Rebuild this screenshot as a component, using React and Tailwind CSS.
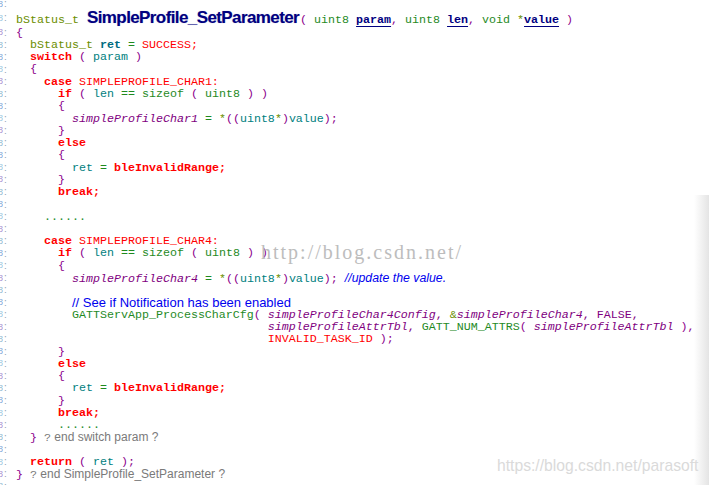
import React from "react";

const P = "text-[#8b008b]";
const G = "text-[#1f8a1f]";
const O = "text-[#6b8e00]";
const TL = "text-[#008080]";
const R = "text-[#ff0000]";
const RB = "text-[#ff0000] font-bold";
const IT = "text-[#800080] italic";
const FN = "text-[#800080]";
const GR = "text-[#7a7a7a]";
const BL = "text-[#0000ee] font-['Liberation_Sans',sans-serif] text-[13px]";
const BLI = "text-[#0000ee] font-['Liberation_Sans',sans-serif] text-[12.3px] italic";
const GS = "text-[#7a7a7a] font-['Liberation_Sans',sans-serif] text-[12px]";

const sp = (n) => " ".repeat(n);

const ifLine = (ind) => [
  [sp(ind), ""],
  ["if", RB],
  [" ", ""],
  ["(", P],
  [" ", ""],
  ["len", TL],
  [" ", ""],
  ["==", G],
  [" ", ""],
  ["sizeof", G],
  [" ", ""],
  ["(", P],
  [" ", ""],
  ["uint8", G],
  [" ", ""],
  [")", P],
  [" ", ""],
  [")", P],
];

const brace = (ind, ch = "{") => [[sp(ind), ""], [ch, P]];

const assign = (name) => [
  [sp(8), ""],
  [name, IT],
  [" ", ""],
  ["=", G],
  [" ", ""],
  ["*", O],
  ["((", P],
  ["uint8", TL],
  ["*", O],
  [")", P],
  ["value", TL],
  [")", P],
  [";", P],
];

const retInvalid = [
  [sp(8), ""],
  ["ret", TL],
  [" ", ""],
  ["=", G],
  [" ", ""],
  ["bleInvalidRange;", R + " font-bold"],
];

const lines = [
  [],
  "HEADER",
  brace(0),
  [
    [sp(2), ""],
    ["bStatus_t", O],
    [" ", ""],
    ["ret", "text-[#006b80] font-bold"],
    [" ", ""],
    ["=", G],
    [" ", ""],
    ["SUCCESS;", R],
  ],
  [
    [sp(2), ""],
    ["switch", RB],
    [" ", ""],
    ["(", P],
    [" ", ""],
    ["param", TL],
    [" ", ""],
    [")", P],
  ],
  brace(2),
  [
    [sp(4), ""],
    ["case", RB],
    [" ", ""],
    ["SIMPLEPROFILE_CHAR1:", R],
  ],
  ifLine(6),
  brace(6),
  assign("simpleProfileChar1"),
  brace(6, "}"),
  [[sp(6), ""], ["else", RB]],
  brace(6),
  retInvalid,
  brace(6, "}"),
  [[sp(6), ""], ["break;", RB]],
  [],
  [[sp(4), ""], ["......", G]],
  [],
  [
    [sp(4), ""],
    ["case", RB],
    [" ", ""],
    ["SIMPLEPROFILE_CHAR4:", R],
  ],
  ifLine(6),
  brace(6),
  [...assign("simpleProfileChar4"), [" ", ""], ["//update the value.", BLI]],
  [],
  [[sp(8), ""], ["// See if Notification has been enabled", BL]],
  [
    [sp(8), ""],
    ["GATTServApp_ProcessCharCfg", G],
    ["(", P],
    [" ", ""],
    ["simpleProfileChar4Config", IT],
    [",", FN],
    [" ", ""],
    ["&", O],
    ["simpleProfileChar4", IT],
    [",", FN],
    [" ", ""],
    ["FALSE,", FN],
  ],
  [
    [sp(36), ""],
    ["simpleProfileAttrTbl", IT],
    [",", FN],
    [" ", ""],
    ["GATT_NUM_ATTRS", G],
    ["(", P],
    [" ", ""],
    ["simpleProfileAttrTbl", IT],
    [" ", ""],
    ["),", P],
  ],
  [
    [sp(36), ""],
    ["INVALID_TASK_ID", R],
    [" ", ""],
    [");", P],
  ],
  brace(6, "}"),
  [[sp(6), ""], ["else", RB]],
  brace(6),
  retInvalid,
  brace(6, "}"),
  [[sp(6), ""], ["break;", RB]],
  [[sp(6), ""], ["......", G]],
  [
    [sp(2), ""],
    ["}", P],
    [" ", ""],
    ["?", GR],
    [" end switch param ?", GS],
  ],
  [],
  [
    [sp(2), ""],
    ["return", RB],
    [" ", ""],
    ["(", P],
    [" ", ""],
    ["ret", TL],
    [" ", ""],
    [")", P],
    [";", P],
  ],
  [
    ["}", P],
    [" ", ""],
    ["?", GR],
    [" end SimpleProfile_SetParameter ?", GS],
  ],
  [],
];

const digitColors = [
  "text-[#7fa6d8]",
  "text-[#9cc6e0]",
  "text-[#a78fd0]",
  "text-[#8fb8d0]",
];

function Gutter({ i, h }) {
  return (
    <div className={"flex shrink-0 w-[16px] items-center " + h}>
      <div className="w-[3px] overflow-hidden flex justify-end">
        <span
          className={
            "font-['Liberation_Sans',sans-serif] text-[9px] leading-none " +
            digitColors[i % 4]
          }
        >
          8
        </span>
      </div>
      <span className="ml-[1px] font-['Liberation_Sans',sans-serif] text-[10px] leading-none text-[#94a3b8]">
        :
      </span>
    </div>
  );
}

function Header() {
  return (
    <div className="flex h-[16.4px]">
      <Gutter i={1} h="h-[16.4px]" />
      <div className="flex items-baseline whitespace-pre font-['Liberation_Mono',monospace] text-[11.67px] leading-[16.4px]">
        <span className={O}>bStatus_t</span>
        <span className="ml-[8px] mr-[1px] font-['Liberation_Sans',sans-serif] font-bold text-[17px] tracking-[-0.6px] text-[#000080] [text-shadow:0_0_1px_rgba(0,0,128,0.35)]">
          SimpleProfile_SetParameter
        </span>
        <span className={P}>(</span>
        <span> </span>
        <span className={G}>uint8</span>
        <span> </span>
        <span className="text-[#000080] font-bold underline decoration-[#000080] underline-offset-[3px]">
          param
        </span>
        <span className={P}>,</span>
        <span> </span>
        <span className={G}>uint8</span>
        <span> </span>
        <span className="text-[#000080] font-bold underline decoration-[#000080] underline-offset-[3px]">
          len
        </span>
        <span className={P}>,</span>
        <span> </span>
        <span className={G}>void</span>
        <span> </span>
        <span className={O}>*</span>
        <span className="text-[#000080] font-bold underline decoration-[#000080] underline-offset-[3px]">
          value
        </span>
        <span> </span>
        <span className={P}>)</span>
      </div>
    </div>
  );
}

export default function App() {
  return (
    <div className="relative w-[709px] h-[485px] overflow-hidden bg-white">
      <div className="-mt-[2px] flex flex-col">
        {lines.map((ln, i) =>
          ln === "HEADER" ? (
            <Header key={i} />
          ) : (
            <div key={i} className="flex h-[12.27px]">
              <Gutter i={i} h="h-[12.27px]" />
              <div className="flex items-baseline whitespace-pre font-['Liberation_Mono',monospace] text-[11.67px] leading-[12.27px]">
                {ln.map(([t, c], j) => (
                  <span key={j} className={c}>
                    {t}
                  </span>
                ))}
              </div>
            </div>
          )
        )}
      </div>

      <div className="absolute left-[261px] top-[242px] font-['Liberation_Serif',serif] text-[20px] leading-[20px] tracking-[2px] text-[#bdbdbd] whitespace-pre">
        http://blog.csdn.net/
      </div>

      <div className="absolute left-[497px] top-[458px] font-['Liberation_Sans',sans-serif] text-[15.7px] leading-[15.7px] text-[#dadada] whitespace-pre">
        https://blog.csdn.net/parasoft
      </div>

      <div className="absolute right-0 top-[195px] bottom-0 w-[15px] bg-linear-to-r from-[#ffffff00] to-[#e4e4e4]" />
    </div>
  );
}
